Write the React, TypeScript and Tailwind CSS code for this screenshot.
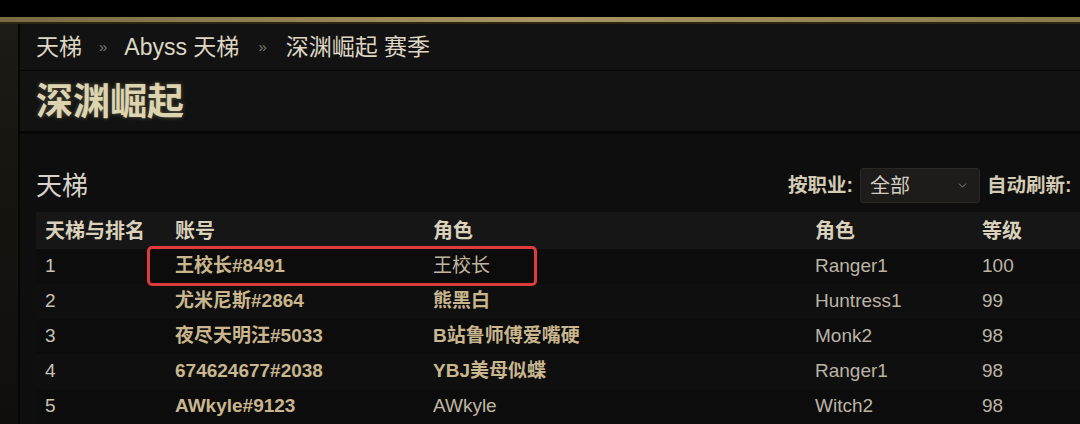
import React from 'react'
import { ChevronDown } from 'lucide-react'

interface Row {
  rank: number
  account: string
  character: string
  charBold: boolean
  className: string
  level: number
}

const rows: Row[] = [
  { rank: 1, account: '王校长#8491', character: '王校长', charBold: false, className: 'Ranger1', level: 100 },
  { rank: 2, account: '尤米尼斯#2864', character: '熊黑白', charBold: true, className: 'Huntress1', level: 99 },
  { rank: 3, account: '夜尽天明汪#5033', character: 'B站鲁师傅爱嘴硬', charBold: true, className: 'Monk2', level: 98 },
  { rank: 4, account: '674624677#2038', character: 'YBJ美母似蝶', charBold: true, className: 'Ranger1', level: 98 },
  { rank: 5, account: 'AWkyle#9123', character: 'AWkyle', charBold: false, className: 'Witch2', level: 98 }
]

const font = { fontFamily: '"Liberation Sans", "Noto Sans CJK SC", sans-serif' }

function Breadcrumb (): JSX.Element {
  return (
    <div className="flex h-[47px] items-center border-b border-[#070707] bg-[#121212] pl-[16px] text-[23px] text-[#ddd6c4]">
      <span>天梯</span>
      <span className="mx-[17px] text-[15px] text-[#7d7870]">»</span>
      <span>Abyss 天梯</span>
      <span className="mx-[19px] text-[15px] text-[#7d7870]">»</span>
      <span>深渊崛起 赛季</span>
    </div>
  )
}

function App (): JSX.Element {
  return (
    <div className="flex h-[424px] w-[1080px] flex-col overflow-hidden bg-black" style={font}>
      <div className="h-[17px] shrink-0 bg-black" />
      <div className="h-[7px] shrink-0 border-b-2 border-[#2e2514] bg-linear-to-r from-[#7a6a44] via-[#a8955f] to-[#8a7a4c]" />
      <div className="flex min-h-0 flex-1">
        <div className="w-[18px] shrink-0 bg-linear-to-b from-[#1e1b17] via-[#16130f] to-[#100e0c]" />
        <div className="flex min-w-0 flex-1 flex-col border-l-2 border-[#060606] bg-[#0e0e0e]">
          <Breadcrumb />
          <div className="flex h-[63px] shrink-0 items-center border-b-[3px] border-[#070707] bg-[#121212] pl-[16px]">
            <h1 className="pt-[2px] text-[37px] font-bold leading-none text-[#dcd3b0] [text-shadow:0_0_4px_rgba(220,205,150,0.35)]">深渊崛起</h1>
          </div>

          <div className="flex flex-col pl-[16px] pt-[34px]">
            <div className="flex h-[35px] items-center">
              <h2 className="w-[752px] shrink-0 text-[26px] leading-none text-[#d7d3cb]">天梯</h2>
              <div className="flex shrink-0 items-center whitespace-nowrap text-[19.5px] font-bold text-[#d4cbb4]">
                <span>按职业:</span>
                <div className="ml-[7px] flex h-[35px] w-[120px] items-center justify-between rounded-[3px] border border-[#2a2825] bg-[#1d1c1a] pl-[9px] pr-[10px]">
                  <span className="text-[20px] font-normal text-[#d2cdc2]">全部</span>
                  <ChevronDown size={13} strokeWidth={1.6} className="text-[#9a958c]" />
                </div>
                <span className="ml-[7px]">自动刷新:</span>
              </div>
            </div>

            <div className="mt-[9px] w-[1100px]">
              <div className="grid h-[37px] grid-cols-[130px_258px_382px_167px_1fr] items-center bg-[#161616] px-[9px] text-[20px] font-bold text-[#d9d1bb]">
                <span>天梯与排名</span>
                <span>账号</span>
                <span>角色</span>
                <span>角色</span>
                <span>等级</span>
              </div>
              {rows.map((row, i) => (
                <div
                  key={row.rank}
                  className={`relative grid h-[35px] grid-cols-[130px_258px_382px_167px_1fr] items-center px-[9px] text-[19px] ${i % 2 === 0 ? 'bg-[#0c0c0c]' : 'bg-[#0f0f0f]'} ${row.rank === 1 ? 'z-10' : ''}`}
                >
                  <span className="text-[#c8c2b6]">{row.rank}</span>
                  <span className="font-bold text-[#c9b68e]">{row.account}</span>
                  <span className={row.charBold ? 'font-bold text-[#c9b68e]' : 'text-[#c0b6a2]'}>{row.character}</span>
                  <span className="text-[#bbb4a6]">{row.className}</span>
                  <span className="text-[#bbb4a6]">{row.level}</span>
                  {row.rank === 1 && (
                    <div className="pointer-events-none absolute left-[111px] top-[-3px] h-[40px] w-[390px] rounded-[5px] border-[3px] border-[#dd3b3c]" />
                  )}
                </div>
              ))}
            </div>
          </div>
        </div>
      </div>
    </div>
  )
}

export default App
